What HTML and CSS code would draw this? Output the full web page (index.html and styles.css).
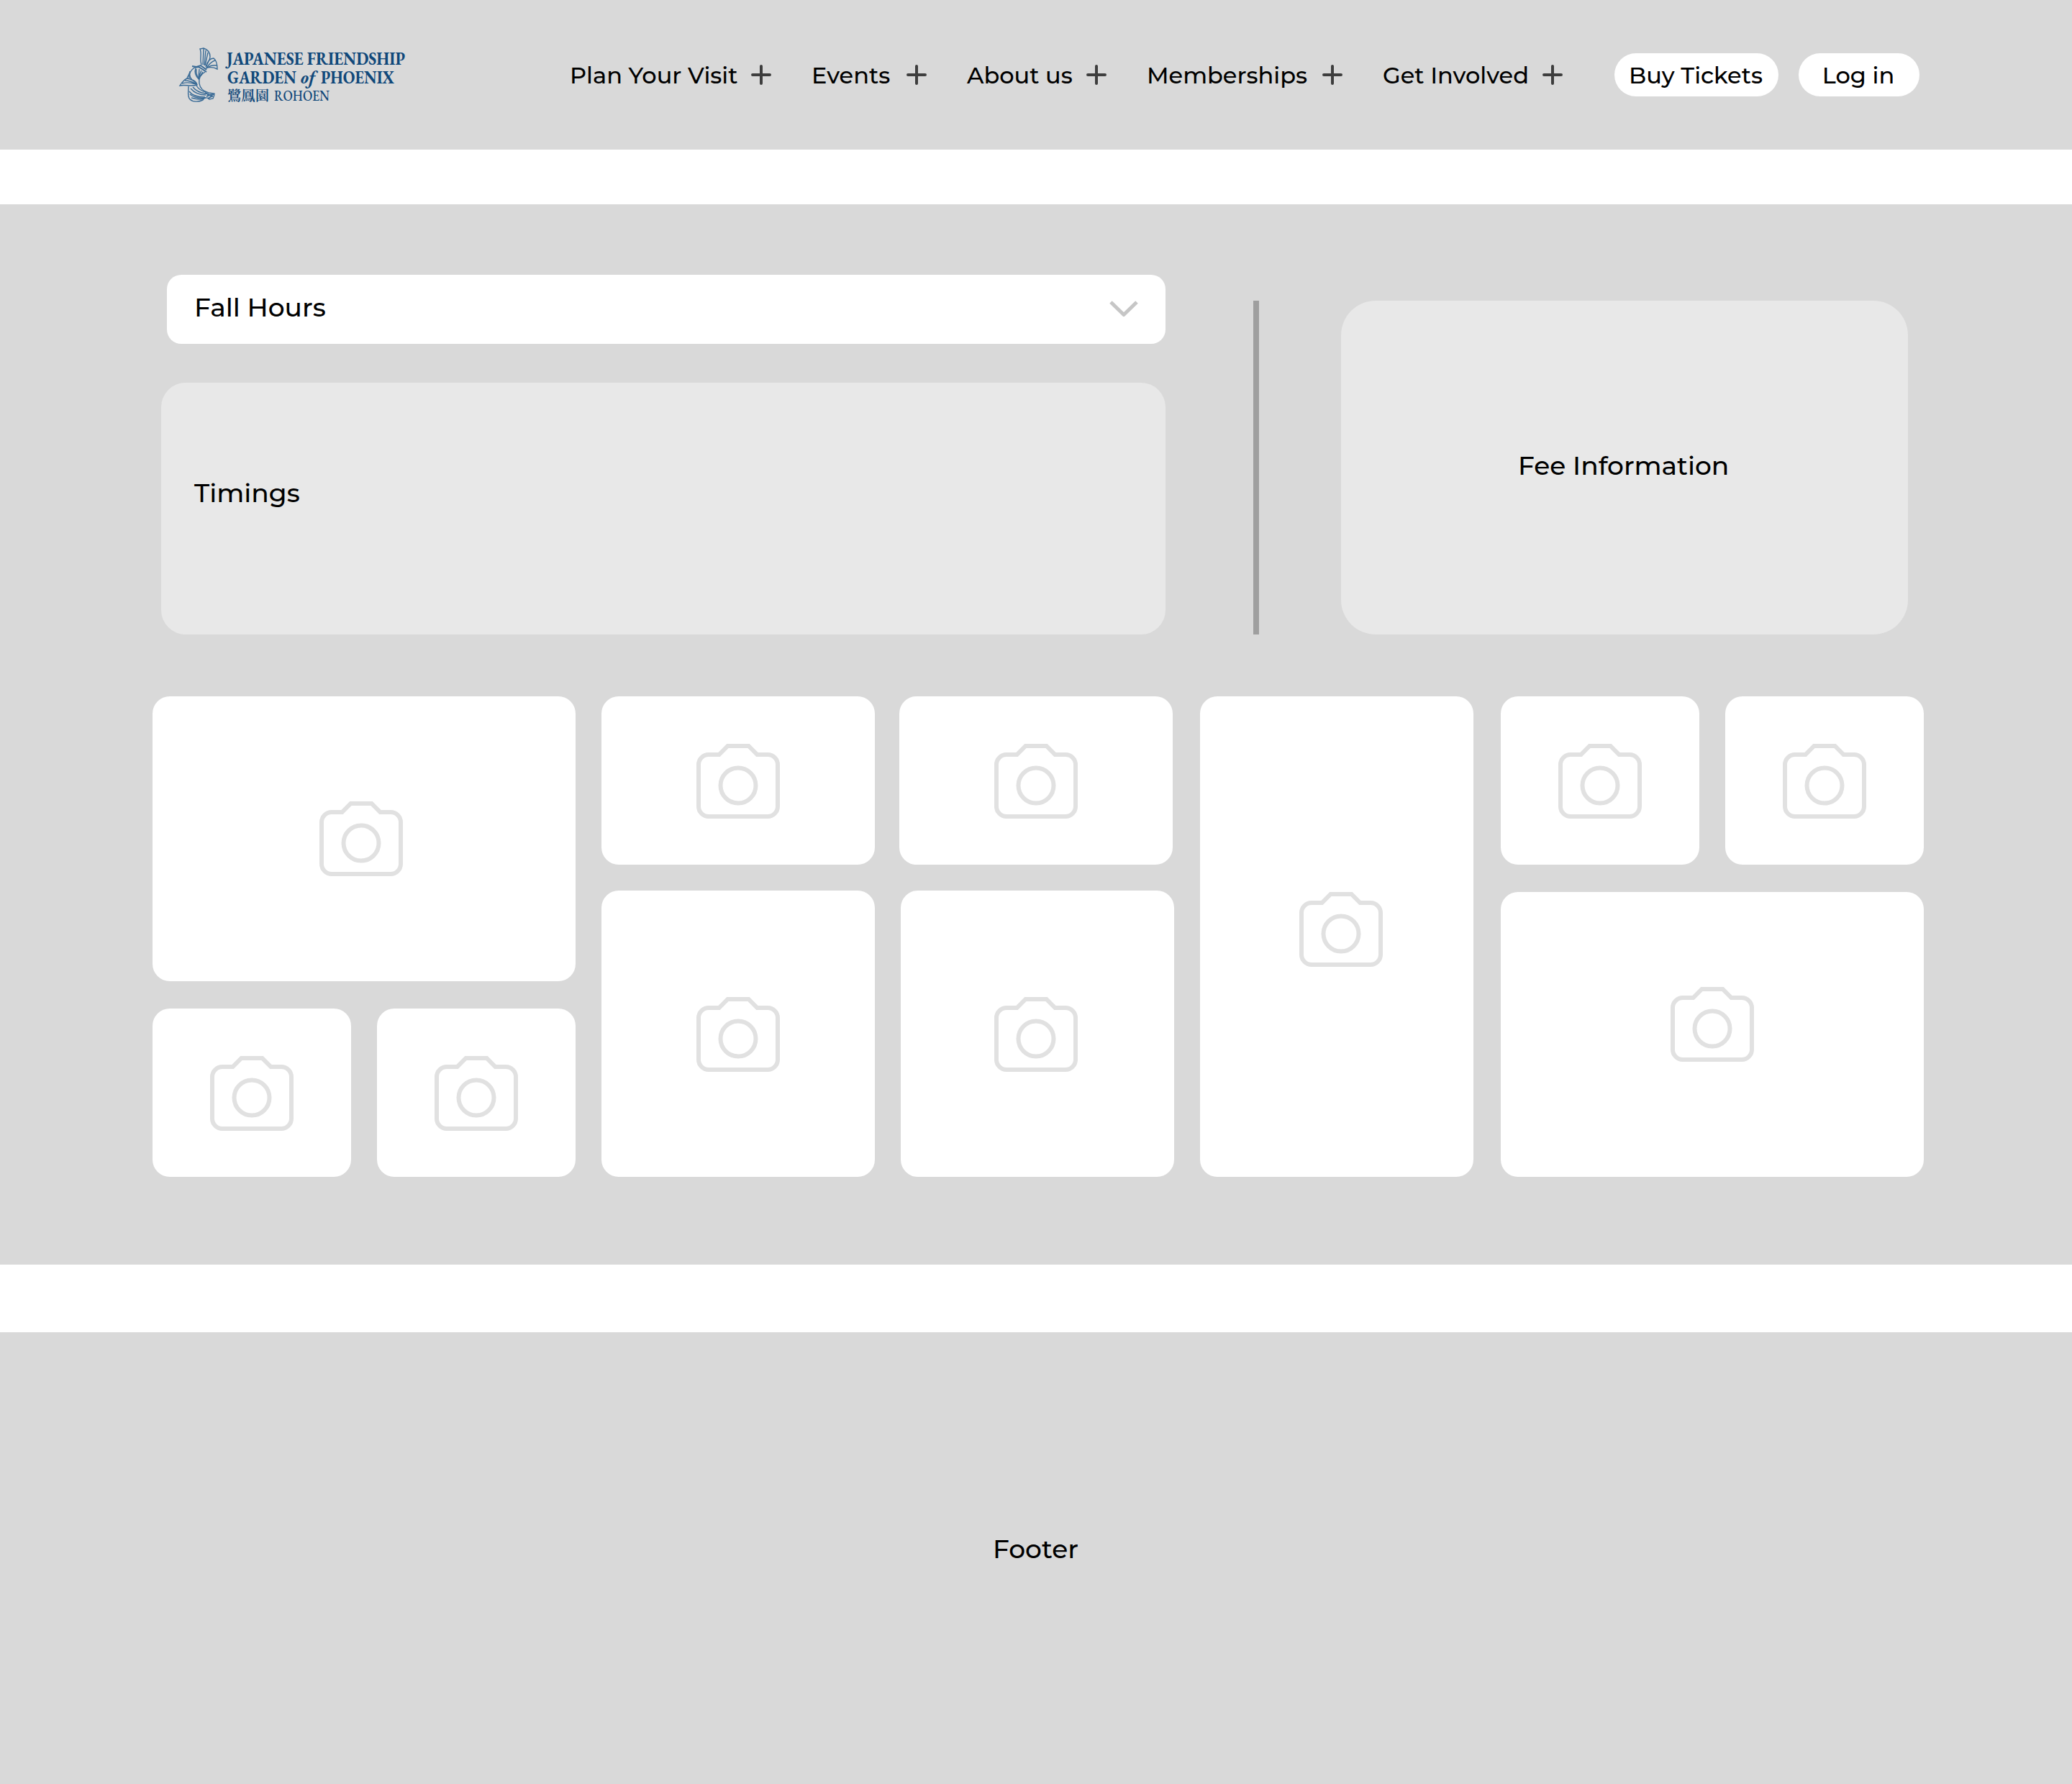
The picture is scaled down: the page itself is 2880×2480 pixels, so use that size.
FILE: index.html
```html
<!DOCTYPE html>
<html lang="en">

<head>
    <meta charset="UTF-8">
    <meta name="viewport" content="width=device-width, initial-scale=1.0">
    <link rel="stylesheet" href="styles.css">
    <title>Japanese Friendship Garden of Phoenix</title>
</head>

<body>
    <!-- shared icons -->
    <svg class="sprite" width="0" height="0">
        <symbol id="camera" viewBox="0 0 116 104">
            <path d="M17 15h14.500l12-12h29l12 12H99a14 14 0 0 1 14 14v58a14 14 0 0 1-14 14H17a14 14 0 0 1-14-14V29a14 14 0 0 1 14-14z" fill="none" stroke="#e1e1e1" stroke-width="6"/>
            <circle cx="58" cy="58" r="24.500" fill="none" stroke="#e1e1e1" stroke-width="6"/>
        </symbol>
        <symbol id="plus" viewBox="0 0 28 28">
            <path d="M14 2v24M2 14h24" fill="none" stroke="#3e3e3e" stroke-width="4" stroke-linecap="round"/>
        </symbol>
    </svg>

    <header class="header">
        <svg class="logo" viewBox="0 0 330 90" width="330" height="90">
            <g class="logo-bird" fill="none">
                <!-- tail -->
                <path d="M30 28C27 20 31 13 28 6l5-1c6 2 9 7 9 12 0 5-4 8-5 13"/>
                <path d="M32 28l1-22M34 29l2-21M35 29l4-18M36 31c2-7 6-12 11-12 4 3 5 9 5 15-6-3-11-3-16-1M37 32c4-5 7-9 12-10M37 33c5-4 9-5 14-4"/>
                <path d="M17 30l6 1 6-2 8 6M20 32l6-1 5 3 6 4" stroke-width="2"/>
                <!-- body -->
                <path d="M20 32c-5 4-8 9-7 15M22 33c-2 5 0 11 5 16M35 38c-7 4-9 10-8 16 1 7 6 11 13 13l8 1c0 3-1 5-2 7l-5 1c-3-3-7-3-9 1-6 3-14 3-18-1-4-4-2-12-2-18"/>
                <path d="M23 34c-1 5 1 10 3 13M27 34l-1 12M30 36l-4 9M32 38l-6 9"/>
                <path d="M13 65c4 6 12 8 22 8M14 69c6 5 14 6 22 5M16 74c7 2 13 3 18 1M15 61c5 6 12 9 21 9M18 59c4 5 9 8 18 9M23 57c3 5 8 8 14 9"/>
                <path d="M35 67l6 3 6-1M37 72l4-2 5 2M39 75l5-3" stroke-width="2"/>
                <!-- wing -->
                <path d="M14 37c0 4-3 6-4 10-4 2-7 5-10 10 8-2 16 2 24-1-1-4-5-7-10-8M3 54c6-2 13-1 19 1M7 50c6 0 11 2 16 5M10 47c5 1 10 3 13 7M14 38c-1 4 0 8 3 11"/>
            </g>
            <g class="logo-text">
                <text class="logo-bold" x="65" y="27.500" font-size="24.500" textLength="248" lengthAdjust="spacingAndGlyphs">JAPANESE FRIENDSHIP</text>
                <text class="logo-bold" x="66" y="53.500" font-size="24" textLength="96" lengthAdjust="spacingAndGlyphs">GARDEN</text>
                <text class="logo-bold logo-italic" x="168" y="53.500" font-size="24" textLength="20" lengthAdjust="spacingAndGlyphs">of</text>
                <text class="logo-bold" x="196" y="53.500" font-size="24" textLength="102" lengthAdjust="spacingAndGlyphs">PHOENIX</text>
                <text class="logo-cjk" x="66" y="77.500" font-size="19" textLength="58" lengthAdjust="spacingAndGlyphs">鷺鳳園</text>
                <text x="131" y="77.500" font-size="20" textLength="77" lengthAdjust="spacingAndGlyphs">ROHOEN</text>
            </g>
        </svg>

        <nav class="nav">
            <a class="nav-item visit"><span>Plan Your Visit</span><svg width="28" height="28"><use href="#plus"/></svg></a>
            <a class="nav-item events"><span>Events</span><svg width="28" height="28"><use href="#plus"/></svg></a>
            <a class="nav-item about"><span>About us</span><svg width="28" height="28"><use href="#plus"/></svg></a>
            <a class="nav-item members"><span>Memberships</span><svg width="28" height="28"><use href="#plus"/></svg></a>
            <a class="nav-item involved"><span>Get Involved</span><svg width="28" height="28"><use href="#plus"/></svg></a>
        </nav>

        <div class="actions">
            <button class="btn tickets">Buy Tickets</button>
            <button class="btn login">Log in</button>
        </div>
    </header>

    <main class="main">
        <section class="info">
            <div class="hours">
                <div class="dropdown">
                    <span>Fall Hours</span>
                    <svg class="chevron" width="40" height="24" viewBox="0 0 40 24">
                        <path d="M2 2l18 17.500L38 2" fill="none" stroke="#c6c6c6" stroke-width="5" stroke-linejoin="round"/>
                    </svg>
                </div>
                <div class="timings"><span>Timings</span></div>
            </div>
            <div class="divider"></div>
            <div class="fees"><span>Fee Information</span></div>
        </section>

        <section class="gallery">
            <div class="col wide">
                <div class="tile large shift-left"><svg class="camera"><use href="#camera"/></svg></div>
                <div class="pair">
                    <div class="tile small"><svg class="camera"><use href="#camera"/></svg></div>
                    <div class="tile small"><svg class="camera"><use href="#camera"/></svg></div>
                </div>
            </div>
            <div class="col stack second">
                <div class="tile small"><svg class="camera"><use href="#camera"/></svg></div>
                <div class="tile rest"><svg class="camera"><use href="#camera"/></svg></div>
            </div>
            <div class="col stack third">
                <div class="tile small"><svg class="camera"><use href="#camera"/></svg></div>
                <div class="tile rest"><svg class="camera"><use href="#camera"/></svg></div>
            </div>
            <div class="col stack fourth">
                <div class="tile tall"><svg class="camera"><use href="#camera"/></svg></div>
            </div>
            <div class="col wide last">
                <div class="pair">
                    <div class="tile small"><svg class="camera"><use href="#camera"/></svg></div>
                    <div class="tile small"><svg class="camera"><use href="#camera"/></svg></div>
                </div>
                <div class="tile large shift-up"><svg class="camera"><use href="#camera"/></svg></div>
            </div>
        </section>
    </main>

    <footer class="footer"><span>Footer</span></footer>
</body>

</html>
```
FILE: styles.css
```css
* {
    box-sizing: border-box;
}

body {
    margin: 0;
    font-family: Montserrat, Inter, sans-serif;
    font-weight: 500;
    font-size: 36px;
    line-height: 44px;
    color: #000;
    background-color: #fff;
}

.sprite {
    display: block;
}

/* header */
.header {
    display: flex;
    height: 208px;
    padding: 62px 212px 0 250px;
    background-color: #d9d9d9;
    font-size: 32px;
    line-height: 39px;
}

.logo {
    flex: none;
    width: 330px;
    height: 90px;
    overflow: visible;
}

.logo-bird {
    stroke: #3a6b96;
    stroke-width: 1.4;
}

.logo-text {
    fill: #10487a;
    font-family: "EB Garamond", "Liberation Serif", serif;
    font-weight: 500;
}

.logo-bold {
    font-weight: bold;
}

.logo-italic {
    font-style: italic;
}

.logo-cjk {
    font-family: "Noto Serif CJK TC", "Noto Sans CJK TC", sans-serif;
    font-weight: 600;
}

.nav {
    display: flex;
    gap: 56px;
    margin-left: 212px;
    padding-top: 23px;
    height: 80px;
}

.nav-item {
    display: flex;
    justify-content: space-between;
    height: 40px;
    white-space: nowrap;
}

.nav-item svg {
    flex: none;
    margin-top: 5px;
}

.visit {
    width: 280px;
}

.events {
    width: 160px;
}

.about {
    width: 194px;
}

.members {
    width: 272px;
}

.involved {
    width: 250px;
}

.actions {
    display: flex;
    gap: 28px;
    margin-left: auto;
    padding-top: 12px;
}

.btn {
    height: 60px;
    padding: 0 2px 0 0;
    border: none;
    border-radius: 30px;
    background-color: #fff;
    color: #000;
    font: inherit;
    cursor: pointer;
}

.tickets {
    width: 228px;
}

.login {
    width: 168px;
}

/* hours and fees */
.main {
    height: 1474px;
    margin: 76px 0 94px;
    padding: 98px 206px 0 212px;
    background-color: #d9d9d9;
}

.info {
    display: flex;
    align-items: flex-end;
    height: 500px;
    padding-left: 12px;
}

.hours {
    width: 1396px;
}

.dropdown {
    display: flex;
    justify-content: space-between;
    height: 96px;
    margin: 0 0 54px 8px;
    padding: 23px 38px 0 38px;
    border-radius: 20px;
    background-color: #fff;
}

.chevron {
    margin-top: 13px;
}

.timings {
    height: 350px;
    padding: 131px 46px 0;
    border-radius: 34px;
    background-color: #e8e8e8;
}

.divider {
    width: 8px;
    height: 464px;
    margin: 0 114px 0 122px;
    background-color: #9f9f9f;
}

.fees {
    width: 788px;
    height: 464px;
    padding: 207px 0 0 246px;
    border-radius: 48px;
    background-color: #e8e8e8;
}

/* photo gallery */
.gallery {
    display: flex;
    height: 668px;
    margin-top: 86px;
}

.col {
    display: flex;
    flex-direction: column;
    justify-content: space-between;
}

.wide {
    width: 588px;
}

.stack {
    width: 380px;
}

.second {
    margin-left: 36px;
}

.third {
    margin-left: 34px;
}

.third .rest {
    margin: 0 -2px 0 2px;
    padding-right: 4px;
}

.fourth {
    margin-left: 38px;
}

.last {
    margin-left: 38px;
}

.pair {
    display: flex;
    gap: 36px;
}

.pair .tile {
    width: 276px;
}

.tile {
    display: flex;
    justify-content: center;
    align-items: center;
    border-radius: 24px;
    background-color: #fff;
}

.small {
    height: 234px;
    padding-top: 2px;
}

.large {
    height: 396px;
}

.rest {
    height: 398px;
    padding-top: 2px;
}

.tall {
    height: 668px;
    padding: 0 0 20px 12px;
}

.shift-left {
    padding-right: 8px;
}

.shift-up {
    padding-bottom: 28px;
}

.camera {
    width: 116px;
    height: 104px;
}

/* footer */
.footer {
    height: 628px;
    padding: 279px 0 0 1380px;
    background-color: #d9d9d9;
}
```
